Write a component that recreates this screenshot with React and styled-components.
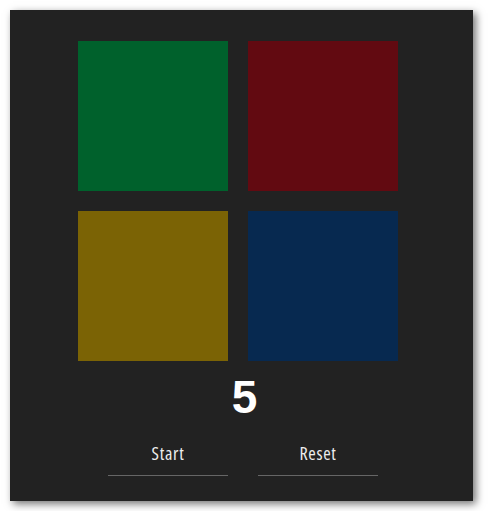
import React from "react";
import styled, { createGlobalStyle } from "styled-components";

const Global = createGlobalStyle`
  html, body { margin: 0; padding: 0; background: #ffffff; }
  body { padding: 10px; font-family: "Open Sans", "Noto Sans", sans-serif; }
`;

const Panel = styled.div`
  width: 463px;
  height: 491px;
  box-sizing: border-box;
  background: #222222;
  box-shadow: 3px 3px 8px rgba(0, 0, 0, 0.55);
  padding: 31px 0 0 3px;
  display: flex;
  flex-direction: column;
  align-items: center;
`;

const Grid = styled.div`
  display: grid;
  grid-template-columns: 150px 150px;
  grid-auto-rows: 150px;
  gap: 20px;
  align-self: flex-start;
  margin-left: 65px;
`;

const Tile = styled.div`
  background: ${(p) => p.$color};
`;

const Count = styled.div`
  margin-top: 9px;
  padding-left: 3px;
  font-family: "Liberation Sans", Arial, sans-serif;
  font-weight: 700;
  font-size: 46px;
  color: #ffffff;
`;

const Controls = styled.div`
  display: flex;
  gap: 30px;
  margin-top: 18px;
`;

const Button = styled.button`
  width: 120px;
  background: transparent;
  border: none;
  border-bottom: 1px solid #666666;
  color: #eeeeee;
  font-family: "Open Sans", "Noto Sans", sans-serif;
  font-stretch: 75%;
  font-size: 18px;
  letter-spacing: 0.7px;
  line-height: 22px;
  padding: 0 0 11px;
  cursor: pointer;
`;

export default function App() {
  return (
    <>
      <Global />
      <Panel>
        <Grid>
          <Tile $color="#00612c" />
          <Tile $color="#620a11" />
          <Tile $color="#7b6305" />
          <Tile $color="#072950" />
        </Grid>
        <Count>5</Count>
        <Controls>
          <Button>Start</Button>
          <Button>Reset</Button>
        </Controls>
      </Panel>
    </>
  );
}
